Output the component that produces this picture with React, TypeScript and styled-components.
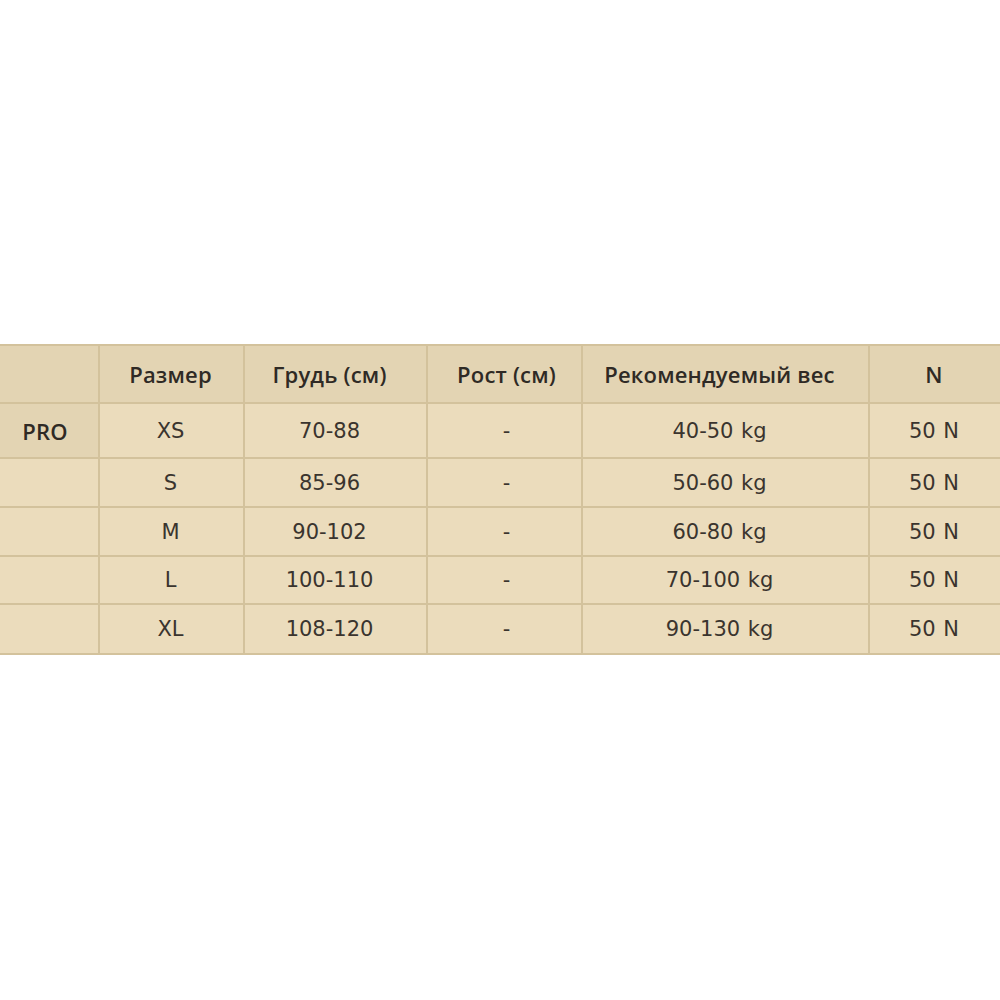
import React from "react";
import styled, { createGlobalStyle } from "styled-components";

const Global = createGlobalStyle`
  html, body { margin: 0; padding: 0; background: #ffffff; }
  body { font-family: "Open Sans", "Lato", sans-serif; }
`;

const Page = styled.div`
  width: 1000px;
  padding-top: 344px;
  overflow: hidden;
`;

const Table = styled.table`
  border-collapse: collapse;
  table-layout: fixed;
  width: 1004px;
  margin-left: -2px;
`;

const Cell = styled.td<{ $head?: boolean; $side?: boolean; $h: number; $shift: number }>`
  height: ${(p) => p.$h}px;
  padding: 0 ${(p) => (p.$shift < 0 ? -2 * p.$shift : 0)}px 0
    ${(p) => (p.$shift > 0 ? 2 * p.$shift : 0)}px;
  box-sizing: border-box;
  border: 2px solid #d3c29c;
  background: ${(p) => (p.$head || p.$side ? "#e3d4b3" : "#ebdcbc")};
  color: ${(p) => (p.$head || p.$side ? "#2f2a25" : "#3a342e")};
  font-family: ${(p) =>
    p.$head || p.$side
      ? `"Open Sans", "Lato", sans-serif`
      : `"DejaVu Sans", "Open Sans", sans-serif`};
  font-size: ${(p) => (p.$head || p.$side ? 22 : 21)}px;
  font-weight: ${(p) => (p.$head || p.$side ? 600 : 400)};
  text-align: center;
  vertical-align: middle;
  white-space: nowrap;
  letter-spacing: ${(p) => (p.$head || p.$side ? 0.2 : 0)}px;
  word-spacing: ${(p) => (p.$head || p.$side ? 0 : 1)}px;
`;

const widths = [100, 145, 183, 155, 287, 134];
const shifts = [-4, -1, -6, 2, -6, -2];
const headers = ["", "Размер", "Грудь (см)", "Рост (см)", "Рекомендуемый вес", "N"];
const rows = [
  ["PRO", "XS", "70-88", "-", "40-50 kg", "50 N"],
  ["", "S", "85-96", "-", "50-60 kg", "50 N"],
  ["", "M", "90-102", "-", "60-80 kg", "50 N"],
  ["", "L", "100-110", "-", "70-100 kg", "50 N"],
  ["", "XL", "108-120", "-", "90-130 kg", "50 N"],
];
const heights = [55, 49, 49, 48, 50];

export default function App() {
  return (
    <Page>
      <Global />
      <Table>
        <colgroup>
          {widths.map((w, i) => (
            <col key={i} style={{ width: w }} />
          ))}
        </colgroup>
        <thead>
          <tr>
            {headers.map((h, i) => (
              <Cell as="th" key={i} $head $h={58} $shift={shifts[i]}>
                {h}
              </Cell>
            ))}
          </tr>
        </thead>
        <tbody>
          {rows.map((r, ri) => (
            <tr key={ri}>
              {r.map((c, ci) => (
                <Cell
                  key={ci}
                  $side={ci === 0 && ri === 0}
                  $h={heights[ri]}
                  $shift={shifts[ci]}
                >
                  {c}
                </Cell>
              ))}
            </tr>
          ))}
        </tbody>
      </Table>
    </Page>
  );
}
